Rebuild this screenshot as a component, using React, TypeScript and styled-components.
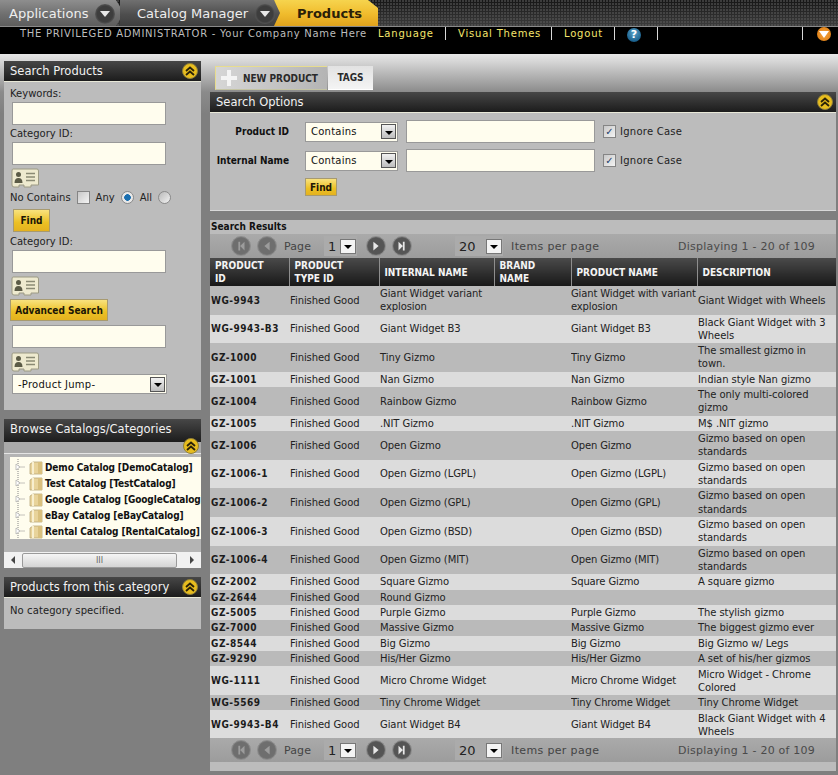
import React from 'react';
import styled, { createGlobalStyle, css } from 'styled-components';

const GlobalStyle = createGlobalStyle`
  html, body {
    margin: 0;
    padding: 0;
    background: #7f7f7f;
    font-family: "DejaVu Sans", Verdana, sans-serif;
    font-size: 10px;
    color: #222;
  }
`;

const boldText = css`
    font-family: "DejaVu Sans Condensed", "DejaVu Sans", Verdana, sans-serif;
    font-stretch: condensed;
    font-weight: 700;
`;

type Row = { id: string; name: string; internal: string; product: string; desc: string };

const rows: Row[] = [
    { id: 'WG-9943', name: 'Finished Good', internal: 'Giant Widget variant explosion', product: 'Giant Widget with variant explosion', desc: 'Giant Widget with Wheels' },
    { id: 'WG-9943-B3', name: 'Finished Good', internal: 'Giant Widget B3', product: 'Giant Widget B3', desc: 'Black Giant Widget with 3 Wheels' },
    { id: 'GZ-1000', name: 'Finished Good', internal: 'Tiny Gizmo', product: 'Tiny Gizmo', desc: 'The smallest gizmo in town.' },
    { id: 'GZ-1001', name: 'Finished Good', internal: 'Nan Gizmo', product: 'Nan Gizmo', desc: 'Indian style Nan gizmo' },
    { id: 'GZ-1004', name: 'Finished Good', internal: 'Rainbow Gizmo', product: 'Rainbow Gizmo', desc: 'The only multi-colored gizmo' },
    { id: 'GZ-1005', name: 'Finished Good', internal: '.NIT Gizmo', product: '.NIT Gizmo', desc: 'M$ .NIT gizmo' },
    { id: 'GZ-1006', name: 'Finished Good', internal: 'Open Gizmo', product: 'Open Gizmo', desc: 'Gizmo based on open standards' },
    { id: 'GZ-1006-1', name: 'Finished Good', internal: 'Open Gizmo (LGPL)', product: 'Open Gizmo (LGPL)', desc: 'Gizmo based on open standards' },
    { id: 'GZ-1006-2', name: 'Finished Good', internal: 'Open Gizmo (GPL)', product: 'Open Gizmo (GPL)', desc: 'Gizmo based on open standards' },
    { id: 'GZ-1006-3', name: 'Finished Good', internal: 'Open Gizmo (BSD)', product: 'Open Gizmo (BSD)', desc: 'Gizmo based on open standards' },
    { id: 'GZ-1006-4', name: 'Finished Good', internal: 'Open Gizmo (MIT)', product: 'Open Gizmo (MIT)', desc: 'Gizmo based on open standards' },
    { id: 'GZ-2002', name: 'Finished Good', internal: 'Square Gizmo', product: 'Square Gizmo', desc: 'A square gizmo' },
    { id: 'GZ-2644', name: 'Finished Good', internal: 'Round Gizmo', product: '', desc: '' },
    { id: 'GZ-5005', name: 'Finished Good', internal: 'Purple Gizmo', product: 'Purple Gizmo', desc: 'The stylish gizmo' },
    { id: 'GZ-7000', name: 'Finished Good', internal: 'Massive Gizmo', product: 'Massive Gizmo', desc: 'The biggest gizmo ever' },
    { id: 'GZ-8544', name: 'Finished Good', internal: 'Big Gizmo', product: 'Big Gizmo', desc: 'Big Gizmo w/ Legs' },
    { id: 'GZ-9290', name: 'Finished Good', internal: 'His/Her Gizmo', product: 'His/Her Gizmo', desc: 'A set of his/her gizmos' },
    { id: 'WG-1111', name: 'Finished Good', internal: 'Micro Chrome Widget', product: 'Micro Chrome Widget', desc: 'Micro Widget - Chrome Colored' },
    { id: 'WG-5569', name: 'Finished Good', internal: 'Tiny Chrome Widget', product: 'Tiny Chrome Widget', desc: 'Tiny Chrome Widget' },
    { id: 'WG-9943-B4', name: 'Finished Good', internal: 'Giant Widget B4', product: 'Giant Widget B4', desc: 'Black Giant Widget with 4 Wheels' },
];

const catalogs = [
    'Demo Catalog [DemoCatalog]',
    'Test Catalog [TestCatalog]',
    'Google Catalog [GoogleCatalog]',
    'eBay Catalog [eBayCatalog]',
    'Rental Catalog [RentalCatalog]',
];

/* ---------- header ---------- */

const TopBar = styled.div`
    height: 26px;
    display: flex;
    border-bottom: 1px solid #8a8a8a;
    background-color: #2a2a2a;
    background-image:
        radial-gradient(circle at 1px 1px, rgba(90, 90, 90, 0.55) 1px, transparent 1px),
        linear-gradient(#161616, #3c3c3c);
    background-size: 3px 3px, 100% 100%;
`;

const Tab = styled.div<{ $tone: 'light' | 'dark' | 'gold' }>`
    height: 26px;
    display: flex;
    align-items: center;
    box-sizing: border-box;
    padding-top: 1px;
    font-size: 13px;
    white-space: nowrap;
    color: ${(p) => (p.$tone === 'gold' ? '#2a2008' : '#eee')};
    font-weight: ${(p) => (p.$tone === 'gold' ? 700 : 400)};
    background: ${(p) =>
        p.$tone === 'light'
            ? 'linear-gradient(#8e8e8e, #6f6f6f 55%, #5d5d5d)'
            : p.$tone === 'dark'
              ? 'linear-gradient(#707070, #4e4e4e 55%, #3e3e3e)'
              : 'linear-gradient(#f6d44e, #f0bb2c 55%, #dfa21d)'};
    clip-path: ${(p) =>
        p.$tone === 'gold'
            ? 'polygon(0 100%, 6px 50%, 0 0, calc(100% - 10px) 0, 100% 8px, 100% 100%)'
            : 'polygon(0 0, calc(100% - 8px) 0, 100% 50%, calc(100% - 8px) 100%, 0 100%)'};
`;

const AppTab = styled(Tab)`
    width: 124px;
    padding-left: 9px;
    gap: 7px;
`;

const CatalogTab = styled(Tab)`
    width: 162px;
    padding-left: 17px;
    gap: 7px;
    margin-left: -4px;
`;

const ProductsTab = styled(Tab)`
    width: 104px;
    padding-left: 23px;
    margin-left: -8px;
`;

const TabArrow = styled.span`
    width: 20px;
    height: 20px;
    border-radius: 50%;
    background: radial-gradient(circle, #3d3d3d 55%, #5c5c5c 75%, #777);
    display: flex;
    align-items: center;
    justify-content: center;
    &::after {
        content: '';
        border-left: 5px solid transparent;
        border-right: 5px solid transparent;
        border-top: 6px solid #e8e8e8;
        margin-top: 1px;
    }
`;

const NavBar = styled.div`
    height: 27px;
    background: #000;
    display: flex;
    align-items: flex-start;
    padding-left: 20px;
`;

const NavTitle = styled.span`
    color: #bdbdbd;
    line-height: 13px;
    width: 358px;
    white-space: nowrap;
    letter-spacing: 0.7px;
`;

const NavLink = styled.span<{ $w: number }>`
    color: #f5e66c;
    line-height: 13px;
    width: ${(p) => p.$w}px;
    height: 13px;
    white-space: nowrap;
    letter-spacing: 0.8px;
`;

const NavDivider = styled.span<{ $after: number }>`
    width: 1px;
    height: 13px;
    background: #d8d8d8;
    margin-right: ${(p) => p.$after}px;
`;

const HelpIcon = styled.span`
    width: 14px;
    height: 14px;
    border-radius: 50%;
    margin: 1px 16px 0 0;
    background: radial-gradient(circle at 50% 35%, #5aa2c8, #1c6390 70%, #0d3f60);
    color: #fff;
    font-weight: 700;
    font-size: 11px;
    line-height: 14px;
    text-align: center;
`;

const MenuIcon = styled.span`
    width: 14px;
    height: 14px;
    border-radius: 50%;
    background: radial-gradient(circle, #f7a53a, #d9760e);
    display: flex;
    align-items: center;
    justify-content: center;
    &::after {
        content: '';
        border-left: 5px solid transparent;
        border-right: 5px solid transparent;
        border-top: 7px solid #fff;
    }
`;

/* ---------- page ---------- */

const Content = styled.div`
    display: flex;
    align-items: flex-start;
    gap: 9px;
    padding: 7px 2px 3px 4px;
    height: 711px;
    overflow: hidden;
    background: linear-gradient(#e8e8e8, #8b8b8b 38px, #7f7f7f 60px);
`;

const Sidebar = styled.div`
    width: 197px;
    display: flex;
    flex-direction: column;
    gap: 9px;
`;

const Main = styled.div`
    width: 626px;
    padding-top: 5px;
`;

const PanelHeader = styled.div<{ $h?: number }>`
    height: ${(p) => p.$h ?? 20}px;
    background: linear-gradient(#474747, #1c1c1c);
    color: #f2f2f2;
    font-size: 11.5px;
    display: flex;
    align-items: center;
    justify-content: space-between;
    padding: 0 3px 0 6px;
`;

const BrowseHeader = styled(PanelHeader)`
    box-sizing: border-box;
    padding-bottom: 4px;
`;

const PanelBody = styled.div`
    background: #bcbcbc;
    border-top: 1px solid #e8e8d8;
    padding: 6px 6px 0;
`;

const SearchBody = styled(PanelBody)`
    height: 323px;
    padding-top: 5px;
`;

const FieldLabel = styled.div<{ $mt?: number }>`
    line-height: 13px;
    margin: ${(p) => p.$mt ?? 0}px 0 2px;
`;

const FieldInput = styled.div<{ $mt?: number }>`
    width: 152px;
    height: 21px;
    margin: ${(p) => p.$mt ?? 0}px 0 0 2px;
    background: #fffdee;
    border: 1px solid #999;
`;

const LookupWrap = styled.div<{ $mt: number }>`
    margin: ${(p) => p.$mt}px 0 0 1px;
    height: 20px;
`;

const ContainsRow = styled.div`
    display: flex;
    align-items: center;
    gap: 6px;
    height: 16px;
    padding-top: 1px;
`;

const CheckBox = styled.span`
    width: 11px;
    height: 11px;
    border: 1px solid #858585;
    background: linear-gradient(135deg, #c8c8c8, #f4f4f4);
    color: #21406d;
    display: inline-flex;
    align-items: center;
    justify-content: center;
    font-size: 10px;
    line-height: 11px;
    font-weight: 700;
`;

const Radio = styled.span<{ $on?: boolean }>`
    width: 11px;
    height: 11px;
    border-radius: 50%;
    border: 1px solid #8a8a8a;
    background: ${(p) =>
        p.$on
            ? 'radial-gradient(circle, #1a6fb0 0 3px, #e8e8e8 3.6px)'
            : 'linear-gradient(135deg, #b8b8b8, #f2f2f2)'};
`;

const GoldButton = styled.div<{ $w: number; $h: number }>`
    ${boldText}
    width: ${(p) => p.$w}px;
    height: ${(p) => p.$h}px;
    background: linear-gradient(#f8e27e, #ecc024 60%, #e4b21f);
    border: 1px solid #a79a70;
    box-sizing: border-box;
    color: #1c1606;
    display: flex;
    align-items: center;
    justify-content: center;
    white-space: nowrap;
`;

const FindSide = styled(GoldButton)`
    margin: 4px 0 3px 3px;
`;

const AdvancedButton = styled(GoldButton)`
    margin-top: 3px;
`;

const FormSelect = styled.div<{ $w: number; $h: number }>`
    width: ${(p) => p.$w}px;
    height: ${(p) => p.$h}px;
    box-sizing: border-box;
    background: #fffdee;
    border: 1px solid #999;
    display: flex;
    align-items: center;
    justify-content: space-between;
    padding: 0 1px 0 5px;
    color: #111;
    letter-spacing: 0.25px;
`;

const SelectArrow = styled.span`
    width: 15px;
    height: 15px;
    box-sizing: border-box;
    border: 1px solid #555;
    background: linear-gradient(#f2f2f2, #bdbdbd);
    display: flex;
    align-items: center;
    justify-content: center;
    &::after {
        content: '';
        border-left: 4px solid transparent;
        border-right: 4px solid transparent;
        border-top: 4px solid #000;
        margin-top: 2px;
    }
`;

const JumpSelect = styled(FormSelect)`
    margin: 2px 0 0 2px;
`;

const GrayStrip = styled.div`
    height: 11px;
    background: #a9a9a9;
    position: relative;
`;

const StripCollapse = styled.span`
    position: absolute;
    right: 2px;
    top: -4px;
`;

const TreeArea = styled.div`
    background: #b4b4b4;
    border-top: 1px solid #e4e4e4;
    padding: 3px 0 0 6px;
`;

const TreeBox = styled.div`
    height: 80px;
    padding-top: 2px;
    background: #fffdee;
    overflow: hidden;
    margin-bottom: 13px;
`;

const TreeRow = styled.div`
    ${boldText}
    height: 16px;
    display: flex;
    align-items: center;
    color: #111;
    white-space: nowrap;
    padding-left: 5px;
    gap: 4px;
    letter-spacing: -0.1px;
    svg {
        flex-shrink: 0;
    }
    svg + svg {
        margin-right: -2px;
    }
`;

const ScrollTrack = styled.div`
    height: 16px;
    margin-left: -6px;
    background: #f1f1f1;
    display: flex;
    align-items: center;
    justify-content: space-between;
    padding: 0 7px;
    position: relative;
`;

const ScrollThumb = styled.span`
    position: absolute;
    left: 18px;
    top: 1px;
    width: 153px;
    height: 13px;
    border: 1px solid #9a9a9a;
    border-radius: 2px;
    background: linear-gradient(#f5f5f5, #d4d4d4);
    color: #666;
    font-size: 8px;
    line-height: 13px;
    text-align: center;
`;

const ScrollArrow = styled.span<{ $dir: 'left' | 'right' }>`
    border-top: 4px solid transparent;
    border-bottom: 4px solid transparent;
    border-${(p) => (p.$dir === 'left' ? 'right' : 'left')}: 4px solid #444;
`;

const CategoryBody = styled(PanelBody)`
    height: 25px;
    padding-top: 6px;
    line-height: 14px;
    letter-spacing: 0.1px;
`;

/* ---------- tabs above the results ---------- */

const SubTabs = styled.div`
    display: flex;
    margin-left: 5px;
    height: 24px;
    margin-bottom: 2px;
`;

const NewTab = styled.div`
    ${boldText}
    width: 112px;
    box-sizing: border-box;
    border: 1px solid #e7dc8e;
    border-right: none;
    border-bottom-color: #c4c4a4;
    background: linear-gradient(90deg, #d6d6d6, #b4b4b4);
    display: flex;
    align-items: center;
    gap: 5px;
    padding-left: 4px;
    color: #2a2a2a;
    white-space: nowrap;
    letter-spacing: -0.05px;
`;

const TagsTab = styled.div`
    ${boldText}
    width: 45px;
    margin-left: 1px;
    background: linear-gradient(#e2e2e2, #f4f4f4);
    border-bottom: 1px solid #fff;
    display: flex;
    align-items: center;
    justify-content: center;
    color: #2a2a2a;
`;

const OptionsBody = styled.div`
    height: 99px;
    box-sizing: border-box;
    background: #bcbcbc;
    border-top: 1px solid #e8e8d8;
    border-bottom: 1px solid #d8d8d8;
    padding: 7px 0 0;
    margin-bottom: 9px;
`;

const OptionRow = styled.div`
    display: flex;
    align-items: center;
    height: 23px;
    margin-bottom: 6px;
`;

const OptionLabel = styled.div`
    ${boldText}
    width: 79px;
    text-align: right;
    color: #111;
    margin-right: 16px;
    white-space: nowrap;
`;

const OptionInput = styled.div`
    width: 187px;
    height: 21px;
    margin: 0 8px;
    background: #fffdee;
    border: 1px solid #999;
`;

const IgnoreCase = styled.div`
    display: flex;
    align-items: center;
    gap: 4px;
    letter-spacing: 0.25px;
`;

const FindOption = styled(GoldButton)`
    margin-left: 95px;
`;

const ResultsTitle = styled.div`
    ${boldText}
    height: 14px;
    background: #bcbcbc;
    color: #111;
    line-height: 14px;
    padding-left: 1px;
`;

const Pager = styled.div`
    height: 24px;
    background: linear-gradient(#aaa, #9c9c9c);
    display: flex;
    align-items: center;
    color: #444;
    font-size: 11px;
`;

const PagerButton = styled.span<{ $ml: number; $bright?: boolean }>`
    width: 18px;
    height: 18px;
    margin-left: ${(p) => p.$ml}px;
    border-radius: 50%;
    border: 1px solid #8c8c8c;
    background: radial-gradient(circle, ${(p) => (p.$bright ? '#555' : '#6e6e6e')} 60%, #8b8b8b);
    display: flex;
    align-items: center;
    justify-content: center;
`;

const PagerLabel = styled.span<{ $ml: number; $ls?: number }>`
    margin-left: ${(p) => p.$ml}px;
    white-space: nowrap;
    letter-spacing: ${(p) => p.$ls ?? 0}px;
`;

const PagerPick = styled.span<{ $ml: number; $w: number }>`
    width: ${(p) => p.$w}px;
    height: 20px;
    margin-left: ${(p) => p.$ml}px;
    background: #ababab;
    color: #222;
    font-size: 13px;
    display: flex;
    align-items: center;
    justify-content: space-between;
    padding: 0 1px 0 4px;
    box-sizing: border-box;
`;

const PickArrow = styled.span`
    width: 16px;
    height: 15px;
    box-sizing: border-box;
    border: 1px solid #777;
    background: #f4f4f4;
    display: flex;
    align-items: center;
    justify-content: center;
    &::after {
        content: '';
        border-left: 4px solid transparent;
        border-right: 4px solid transparent;
        border-top: 4px solid #000;
        margin-top: 2px;
    }
`;

const PagerCount = styled.span`
    margin-left: auto;
    margin-right: 21px;
    color: #4a4a4a;
    letter-spacing: 0.22px;
`;

const BottomStrip = styled.div`
    height: 9px;
    background: #bcbcbc;
`;

const Table = styled.table`
    width: 626px;
    table-layout: fixed;
    border-collapse: collapse;
    margin-bottom: -1px;
`;

const Th = styled.th`
    ${boldText}
    height: 28px;
    padding: 0 0 0 5px;
    background: linear-gradient(#4a4a4a, #181818);
    color: #f4f4f4;
    font-size: 10px;
    line-height: 13px;
    text-align: left;
    border-right: 1px solid #8e8e8e;
    &:last-child {
        border-right: none;
    }
`;

const Tr = styled.tr<{ $alt: boolean }>`
    background: ${(p) => (p.$alt ? '#dcdcdc' : '#bababa')};
`;

const Td = styled.td`
    padding: 1.1px 0 1.1px 1px;
    font-size: 10px;
    line-height: 13.2px;
    color: #222;
    vertical-align: middle;
    overflow: hidden;
    letter-spacing: -0.08px;
`;

const ProductCell = styled(Td)`
    padding-left: 0;
    letter-spacing: -0.14px;
`;

const IdCell = styled(Td)`
    ${boldText}
    font-size: 10px;
    letter-spacing: 0.5px;
    color: #1c1c1c;
    white-space: nowrap;
`;

/* ---------- drawn icons ---------- */

const Collapse: React.FC = () => (
    <svg width="16" height="16" viewBox="0 0 16 16">
        <circle cx="8" cy="8" r="7.5" fill="#e8bd1e" stroke="#8f7f3a" />
        <path d="M4 8 L8 4.5 L12 8 M4 12 L8 8.5 L12 12" fill="none" stroke="#2a2208" strokeWidth="1.8" />
    </svg>
);

const Lookup: React.FC = () => (
    <svg width="28" height="20" viewBox="0 0 28 20">
        <path d="M2 1 H26 Q27.500 1 27.500 3 V17 H20 V19 H13 V17 H8 V19 H3 Q1 19 1 17 V3 Q1 1 2 1 Z" fill="#eeeacf" stroke="#9c9a84" />
        <circle cx="7.500" cy="6.500" r="2.500" fill="#5b5b46" />
        <path d="M3.500 15 Q3.500 10 7.500 10 Q11.500 10 11.500 15 Z" fill="#5b5b46" />
        <path d="M15 5.500 H24 M15 9 H24 M15 12.500 H24" stroke="#8a8a74" strokeWidth="1.500" />
    </svg>
);

const Folder: React.FC = () => (
    <svg width="14" height="15" viewBox="0 0 14 15">
        <path d="M1 14 V4 L4 2 H13 V14 Z" fill="#e8d39a" stroke="#b9a77a" strokeWidth="0.8" />
        <path d="M4 2 V14" stroke="#f8efcf" strokeWidth="2" />
        <path d="M9 2 H13 V14 H9 Z" fill="#d9c07e" />
    </svg>
);

const TreeLines: React.FC = () => (
    <svg width="10" height="16" viewBox="0 0 10 16">
        <path d="M3 0 V16 M3.500 8 H10" stroke="#888" strokeWidth="1" strokeDasharray="1 1" fill="none" />
        <path d="M1 5 L5 8 L1 11 Z" fill="#fff" stroke="#aaa" strokeWidth="0.7" />
    </svg>
);

const Plus: React.FC = () => (
    <svg width="18" height="18" viewBox="0 0 18 18">
        <path d="M7 1 H11 V7 H17 V11 H11 V17 H7 V11 H1 V7 H7 Z" fill="#f4f4f4" />
    </svg>
);

const PagerGlyph: React.FC<{ kind: 'first' | 'prev' | 'next' | 'last' }> = ({ kind }) => {
    const path = {
        first: 'M5 3 H7 V13 H5 Z M12 3 V13 L7 8 Z',
        prev: 'M11 3 V13 L5 8 Z',
        next: 'M5 3 V13 L11 8 Z',
        last: 'M4 3 V13 L9 8 Z M9 3 H11 V13 H9 Z',
    }[kind];
    return (
        <svg width="14" height="14" viewBox="0 0 16 16">
            <path d={path} fill={kind === 'next' || kind === 'last' ? '#e8e8e8' : '#9c9c9c'} />
        </svg>
    );
};

const Pagination: React.FC = () => (
    <Pager>
        <PagerButton $ml={21}>
            <PagerGlyph kind="first" />
        </PagerButton>
        <PagerButton $ml={6}>
            <PagerGlyph kind="prev" />
        </PagerButton>
        <PagerLabel $ml={7} $ls={0.1}>
            Page
        </PagerLabel>
        <PagerPick $ml={13} $w={33}>
            1<PickArrow />
        </PagerPick>
        <PagerButton $ml={9} $bright>
            <PagerGlyph kind="next" />
        </PagerButton>
        <PagerButton $ml={6} $bright>
            <PagerGlyph kind="last" />
        </PagerButton>
        <PagerPick $ml={43} $w={48}>
            20
            <PickArrow />
        </PagerPick>
        <PagerLabel $ml={8} $ls={0.35}>
            Items per page
        </PagerLabel>
        <PagerCount>Displaying 1 - 20 of 109</PagerCount>
    </Pager>
);

export default function App() {
    return (
        <>
            <GlobalStyle />
            <TopBar>
                <AppTab $tone="light">
                    Applications
                    <TabArrow />
                </AppTab>
                <CatalogTab $tone="dark">
                    Catalog Manager
                    <TabArrow />
                </CatalogTab>
                <ProductsTab $tone="gold">Products</ProductsTab>
            </TopBar>
            <NavBar>
                <NavTitle>THE PRIVILEGED ADMINISTRATOR - Your Company Name Here</NavTitle>
                <NavLink $w={67}>Language</NavLink>
                <NavDivider $after={12} />
                <NavLink $w={93}>Visual Themes</NavLink>
                <NavDivider $after={12} />
                <NavLink $w={50}>Logout</NavLink>
                <NavDivider $after={12} />
                <HelpIcon>?</HelpIcon>
                <NavDivider $after={144} />
                <NavDivider $after={14} />
                <MenuIcon />
            </NavBar>
            <Content>
                <Sidebar>
                    <div>
                        <PanelHeader>
                            Search Products
                            <Collapse />
                        </PanelHeader>
                        <SearchBody>
                            <FieldLabel>Keywords:</FieldLabel>
                            <FieldInput />
                            <FieldLabel $mt={2}>Category ID:</FieldLabel>
                            <FieldInput />
                            <LookupWrap $mt={3}>
                                <Lookup />
                            </LookupWrap>
                            <ContainsRow>
                                No Contains <CheckBox /> Any <Radio $on /> All <Radio />
                            </ContainsRow>
                            <FindSide $w={37} $h={23}>
                                Find
                            </FindSide>
                            <FieldLabel>Category ID:</FieldLabel>
                            <FieldInput />
                            <LookupWrap $mt={3}>
                                <Lookup />
                            </LookupWrap>
                            <AdvancedButton $w={98} $h={22}>
                                Advanced Search
                            </AdvancedButton>
                            <FieldInput $mt={4} />
                            <LookupWrap $mt={4}>
                                <Lookup />
                            </LookupWrap>
                            <JumpSelect $w={155} $h={20}>
                                -Product Jump-
                                <SelectArrow />
                            </JumpSelect>
                        </SearchBody>
                    </div>
                    <div>
                        <BrowseHeader $h={23}>Browse Catalogs/Categories</BrowseHeader>
                        <GrayStrip>
                            <StripCollapse>
                                <Collapse />
                            </StripCollapse>
                        </GrayStrip>
                        <TreeArea>
                            <TreeBox>
                                {catalogs.map((c) => (
                                    <TreeRow key={c}>
                                        <TreeLines />
                                        <Folder />
                                        {c}
                                    </TreeRow>
                                ))}
                            </TreeBox>
                            <ScrollTrack>
                                <ScrollArrow $dir="left" />
                                <ScrollThumb>III</ScrollThumb>
                                <ScrollArrow $dir="right" />
                            </ScrollTrack>
                        </TreeArea>
                    </div>
                    <div>
                        <PanelHeader>
                            Products from this category
                            <Collapse />
                        </PanelHeader>
                        <CategoryBody>No category specified.</CategoryBody>
                    </div>
                </Sidebar>
                <Main>
                    <SubTabs>
                        <NewTab>
                            <Plus />
                            NEW PRODUCT
                        </NewTab>
                        <TagsTab>TAGS</TagsTab>
                    </SubTabs>
                    <PanelHeader>
                        Search Options
                        <Collapse />
                    </PanelHeader>
                    <OptionsBody>
                        <OptionRow>
                            <OptionLabel>Product ID</OptionLabel>
                            <FormSelect $w={93} $h={20}>
                                Contains
                                <SelectArrow />
                            </FormSelect>
                            <OptionInput />
                            <IgnoreCase>
                                <CheckBox>✓</CheckBox>
                                Ignore Case
                            </IgnoreCase>
                        </OptionRow>
                        <OptionRow>
                            <OptionLabel>Internal Name</OptionLabel>
                            <FormSelect $w={93} $h={20}>
                                Contains
                                <SelectArrow />
                            </FormSelect>
                            <OptionInput />
                            <IgnoreCase>
                                <CheckBox>✓</CheckBox>
                                Ignore Case
                            </IgnoreCase>
                        </OptionRow>
                        <FindOption $w={32} $h={18}>
                            Find
                        </FindOption>
                    </OptionsBody>
                    <ResultsTitle>Search Results</ResultsTitle>
                    <Pagination />
                    <Table>
                        <colgroup>
                            <col width="79" />
                            <col width="90" />
                            <col width="115" />
                            <col width="77" />
                            <col width="126" />
                            <col width="139" />
                        </colgroup>
                        <thead>
                            <tr>
                                <Th>
                                    PRODUCT
                                    <br />
                                    ID
                                </Th>
                                <Th>
                                    PRODUCT
                                    <br />
                                    TYPE ID
                                </Th>
                                <Th>INTERNAL NAME</Th>
                                <Th>
                                    BRAND
                                    <br />
                                    NAME
                                </Th>
                                <Th>PRODUCT NAME</Th>
                                <Th>DESCRIPTION</Th>
                            </tr>
                        </thead>
                        <tbody>
                            {rows.map((r, i) => (
                                <Tr key={r.id} $alt={i % 2 === 1}>
                                    <IdCell>{r.id}</IdCell>
                                    <Td>{r.name}</Td>
                                    <Td>{r.internal}</Td>
                                    <Td />
                                    <ProductCell>{r.product}</ProductCell>
                                    <Td>{r.desc}</Td>
                                </Tr>
                            ))}
                        </tbody>
                    </Table>
                    <Pagination />
                    <BottomStrip />
                </Main>
            </Content>
        </>
    );
}
